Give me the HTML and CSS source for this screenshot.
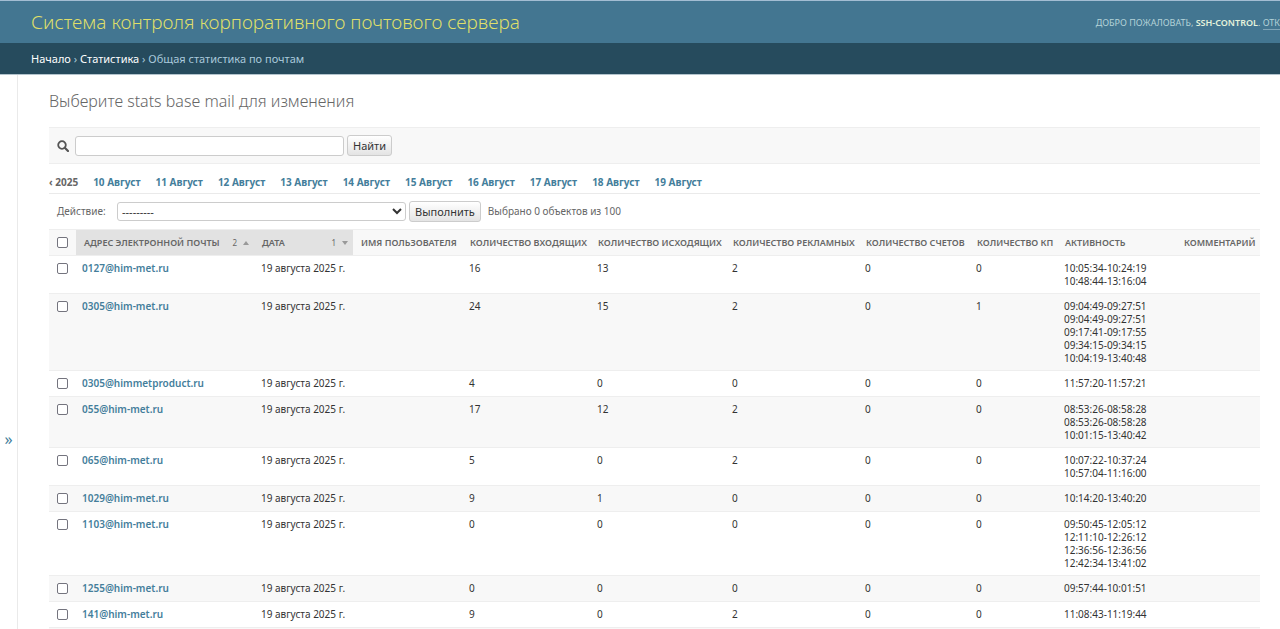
FILE: index.html
```html
<!DOCTYPE html>
<html lang="ru">

<head>
  <meta charset="UTF-8">
  <meta name="viewport" content="width=device-width, initial-scale=1.0">
  <title>Общая статистика по почтам</title>
  <link rel="stylesheet" href="styles.css">
</head>

<body>
  <header class="header">
    <h1 class="site-name"><a href="#">Система контроля корпоративного почтового сервера</a></h1>
    <div class="user-tools">Добро пожаловать, <strong>ssh-control</strong>. <a href="#">Отк</a></div>
  </header>
  <nav class="breadcrumbs">
    <a href="#">Начало</a> › <a href="#">Статистика</a> › Общая статистика по почтам
  </nav>
  <div class="main">
    <aside class="sidebar">
      <button type="button" class="sidebar-toggle" aria-label="Показать навигацию">»</button>
    </aside>
    <main class="content">
      <h2 class="page-title">Выберите stats base mail для изменения</h2>
      <form class="search">
        <label for="searchbar" aria-label="Поиск">
          <svg class="search-icon" viewBox="0 0 12 12" width="12" height="12">
            <circle cx="5" cy="5" r="3.8" fill="none" stroke="#555" stroke-width="1.8" />
            <path d="M7.8 7.8L11 11" stroke="#555" stroke-width="2.2" stroke-linecap="round" />
          </svg>
        </label>
        <input type="text" id="searchbar" class="search-input">
        <button type="button" class="button">Найти</button>
      </form>
      <nav class="dates">
        <a href="#" class="back">‹ 2025</a>
        <a href="#">10 Август</a>
        <a href="#">11 Август</a>
        <a href="#">12 Август</a>
        <a href="#">13 Август</a>
        <a href="#">14 Август</a>
        <a href="#">15 Август</a>
        <a href="#">16 Август</a>
        <a href="#">17 Август</a>
        <a href="#">18 Август</a>
        <a href="#">19 Август</a>
      </nav>
      <form class="actions">
        <label for="action">Действие:</label>
        <select id="action" class="action-select">
          <option>---------</option>
        </select>
        <button type="button" class="button">Выполнить</button>
        <span class="counter">Выбрано 0 объектов из 100</span>
      </form>
      <div class="results">
        <table class="table">
          <colgroup>
            <col class="col-check">
            <col class="col-mail">
            <col class="col-date">
            <col class="col-user">
            <col class="col-in">
            <col class="col-out">
            <col class="col-ads">
            <col class="col-bills">
            <col class="col-kp">
            <col class="col-activity">
            <col>
          </colgroup>
          <thead>
            <tr>
              <th><input type="checkbox" aria-label="Выбрать все"></th>
              <th class="sorted">
                <div class="sort"><a href="#">Адрес электронной почты</a><span class="priority">2</span><i class="arrow up"></i></div>
              </th>
              <th class="sorted">
                <div class="sort"><a href="#">Дата</a><span class="priority">1</span><i class="arrow down"></i></div>
              </th>
              <th><a href="#">Имя пользователя</a></th>
              <th><a href="#">Количество входящих</a></th>
              <th><a href="#">Количество исходящих</a></th>
              <th><a href="#">Количество рекламных</a></th>
              <th><a href="#">Количество счетов</a></th>
              <th><a href="#">Количество КП</a></th>
              <th><a href="#">Активность</a></th>
              <th><a href="#">Комментарий</a></th>
            </tr>
          </thead>
          <tbody>
            <tr>
              <td><input type="checkbox" aria-label="0127@him-met.ru"></td>
              <td><a href="#">0127@him-met.ru</a></td>
              <td>19 августа 2025 г.</td>
              <td></td>
              <td>16</td>
              <td>13</td>
              <td>2</td>
              <td>0</td>
              <td>0</td>
              <td>10:05:34-10:24:19<br>10:48:44-13:16:04</td>
              <td></td>
            </tr>
            <tr>
              <td><input type="checkbox" aria-label="0305@him-met.ru"></td>
              <td><a href="#">0305@him-met.ru</a></td>
              <td>19 августа 2025 г.</td>
              <td></td>
              <td>24</td>
              <td>15</td>
              <td>2</td>
              <td>0</td>
              <td>1</td>
              <td>09:04:49-09:27:51<br>09:04:49-09:27:51<br>09:17:41-09:17:55<br>09:34:15-09:34:15<br>10:04:19-13:40:48</td>
              <td></td>
            </tr>
            <tr>
              <td><input type="checkbox" aria-label="0305@himmetproduct.ru"></td>
              <td><a href="#">0305@himmetproduct.ru</a></td>
              <td>19 августа 2025 г.</td>
              <td></td>
              <td>4</td>
              <td>0</td>
              <td>0</td>
              <td>0</td>
              <td>0</td>
              <td>11:57:20-11:57:21</td>
              <td></td>
            </tr>
            <tr>
              <td><input type="checkbox" aria-label="055@him-met.ru"></td>
              <td><a href="#">055@him-met.ru</a></td>
              <td>19 августа 2025 г.</td>
              <td></td>
              <td>17</td>
              <td>12</td>
              <td>2</td>
              <td>0</td>
              <td>0</td>
              <td>08:53:26-08:58:28<br>08:53:26-08:58:28<br>10:01:15-13:40:42</td>
              <td></td>
            </tr>
            <tr>
              <td><input type="checkbox" aria-label="065@him-met.ru"></td>
              <td><a href="#">065@him-met.ru</a></td>
              <td>19 августа 2025 г.</td>
              <td></td>
              <td>5</td>
              <td>0</td>
              <td>2</td>
              <td>0</td>
              <td>0</td>
              <td>10:07:22-10:37:24<br>10:57:04-11:16:00</td>
              <td></td>
            </tr>
            <tr>
              <td><input type="checkbox" aria-label="1029@him-met.ru"></td>
              <td><a href="#">1029@him-met.ru</a></td>
              <td>19 августа 2025 г.</td>
              <td></td>
              <td>9</td>
              <td>1</td>
              <td>0</td>
              <td>0</td>
              <td>0</td>
              <td>10:14:20-13:40:20</td>
              <td></td>
            </tr>
            <tr>
              <td><input type="checkbox" aria-label="1103@him-met.ru"></td>
              <td><a href="#">1103@him-met.ru</a></td>
              <td>19 августа 2025 г.</td>
              <td></td>
              <td>0</td>
              <td>0</td>
              <td>0</td>
              <td>0</td>
              <td>0</td>
              <td>09:50:45-12:05:12<br>12:11:10-12:26:12<br>12:36:56-12:36:56<br>12:42:34-13:41:02</td>
              <td></td>
            </tr>
            <tr>
              <td><input type="checkbox" aria-label="1255@him-met.ru"></td>
              <td><a href="#">1255@him-met.ru</a></td>
              <td>19 августа 2025 г.</td>
              <td></td>
              <td>0</td>
              <td>0</td>
              <td>0</td>
              <td>0</td>
              <td>0</td>
              <td>09:57:44-10:01:51</td>
              <td></td>
            </tr>
            <tr>
              <td><input type="checkbox" aria-label="141@him-met.ru"></td>
              <td><a href="#">141@him-met.ru</a></td>
              <td>19 августа 2025 г.</td>
              <td></td>
              <td>9</td>
              <td>0</td>
              <td>2</td>
              <td>0</td>
              <td>0</td>
              <td>11:08:43-11:19:44</td>
              <td></td>
            </tr>
            <tr>
              <td colspan="11"></td>
            </tr>
          </tbody>
        </table>
      </div>
    </main>
  </div>
</body>

</html>
```
FILE: styles.css
```css
* {
  padding: 0;
  margin: 0;
  box-sizing: border-box;
}

body {
  display: flex;
  flex-direction: column;
  min-height: 100vh;
  overflow-x: hidden;
  background-color: #fff;
  color: #333;
  font-family: "Noto Sans", "Open Sans", sans-serif;
  font-size: 10px;
  line-height: 13px;
}

a {
  color: #447e9b;
  text-decoration: none;
}

button,
input,
select {
  font-family: inherit;
  font-size: 11px;
  color: #333;
}

.header {
  display: flex;
  justify-content: space-between;
  align-items: center;
  height: 43px;
  padding-left: 31px;
  border-top: 1px solid #a3bdd3;
  background-color: #437691;
  overflow: hidden;
  white-space: nowrap;
}

.site-name {
  font-size: 19px;
  line-height: 24px;
  font-weight: 300;
}

.site-name a {
  color: #dfdf6a;
}

.user-tools {
  font-size: 9px;
  text-transform: uppercase;
  color: #b4d3d8;
}

.user-tools strong {
  font-weight: 600;
  color: #e4f3dc;
}

.user-tools a {
  color: #b4d3d8;
  border-bottom: 1px solid #7fa5b8;
}

.breadcrumbs {
  height: 32px;
  padding: 8px 31px;
  border-bottom: 1px solid #b3c4cd;
  background-color: #264b5d;
  color: #a9c9db;
  font-size: 11px;
  line-height: 15px;
}

.breadcrumbs a {
  color: #fff;
}

.main {
  display: flex;
  flex: 1;
}

.sidebar {
  flex: none;
  width: 18px;
  padding-top: 354px;
  border-right: 1px solid #eaeaea;
}

.sidebar-toggle {
  width: 17px;
  height: 20px;
  border: none;
  background: none;
  color: #447e9b;
  font-size: 16px;
  line-height: 20px;
  cursor: pointer;
}

.content {
  flex: 1;
  min-width: 0;
  padding: 16px 20px 0 31px;
}

.page-title {
  margin-bottom: 16px;
  color: #666;
  font-size: 16px;
  line-height: 20px;
  font-weight: 300;
}

.search {
  display: flex;
  align-items: center;
  gap: 3px;
  height: 37px;
  padding: 0 8px;
  border-top: 1px solid #eee;
  border-bottom: 1px solid #eee;
  background-color: #f8f8f8;
}

.search label {
  width: 15px;
}

.search-icon {
  display: block;
}

.search-input {
  width: 269px;
  height: 20px;
  padding: 0 5px;
  border: 1px solid #ccc;
  border-radius: 3px;
  background-color: #fff;
}

.button {
  height: 21px;
  padding: 0 5px;
  border: 1px solid #ccc;
  border-radius: 3px;
  background: linear-gradient(#fff, #e4e4e4);
  line-height: 13px;
  cursor: pointer;
}

.dates {
  display: flex;
  gap: 15px;
  height: 30px;
  padding-top: 12px;
  border-bottom: 1px solid #eaeaea;
  font-weight: 700;
}

.dates .back {
  color: #666;
}

.actions {
  display: flex;
  align-items: center;
  gap: 3px;
  height: 35px;
  padding: 0 8px;
  color: #666;
}

.actions label {
  width: 57px;
}

.action-select {
  width: 289px;
  height: 19px;
  border: 1px solid #ccc;
  border-radius: 3px;
  background-color: #fff;
}

.counter {
  margin-left: 4px;
}

.results {
  overflow-x: auto;
}

.table {
  width: 100%;
  min-width: 1200px;
  table-layout: fixed;
  border-collapse: separate;
  border-spacing: 0;
}

.col-check {
  width: 27px;
}

.col-mail {
  width: 178px;
}

.col-date {
  width: 99px;
}

.col-user {
  width: 109px;
}

.col-in {
  width: 128px;
}

.col-out {
  width: 135px;
}

.col-ads {
  width: 133px;
}

.col-bills {
  width: 111px;
}

.col-kp {
  width: 88px;
}

.col-activity {
  width: 119px;
}

th {
  height: 27px;
  padding: 0 5px 0 8px;
  border-top: 1px solid #eee;
  border-bottom: 1px solid #eee;
  background-color: #f8f8f8;
  color: #666;
  font-size: 9px;
  font-weight: 600;
  text-align: left;
  text-transform: uppercase;
  white-space: nowrap;
}

th a {
  color: #666;
}

th.sorted {
  background-color: #e2e2e2;
}

.sort {
  display: flex;
  align-items: center;
}

.priority {
  margin-left: auto;
  font-size: 8px;
  font-weight: 400;
}

.arrow {
  margin-left: 6px;
  border: 3px solid transparent;
}

.arrow.up {
  border-top: none;
  border-bottom: 4px solid #999;
}

.arrow.down {
  border-top: 4px solid #999;
  border-bottom: none;
}

td {
  height: 26px;
  padding: 6px 6px 5px 7px;
  border-bottom: 1px solid #eee;
  vertical-align: top;
  white-space: nowrap;
}

td:nth-child(2) {
  padding-left: 6px;
}

td:first-child {
  padding: 7px 8px 6px;
}

td a {
  font-weight: 600;
}

tbody tr:nth-child(even) {
  background-color: #f8f8f8;
}

input[type="checkbox"] {
  appearance: none;
  display: block;
  width: 11px;
  height: 11px;
  border: 1px solid #74747e;
  border-radius: 2px;
  background-color: #fff;
}

input[type="checkbox"]:checked {
  background-color: #447e9b;
}
```
